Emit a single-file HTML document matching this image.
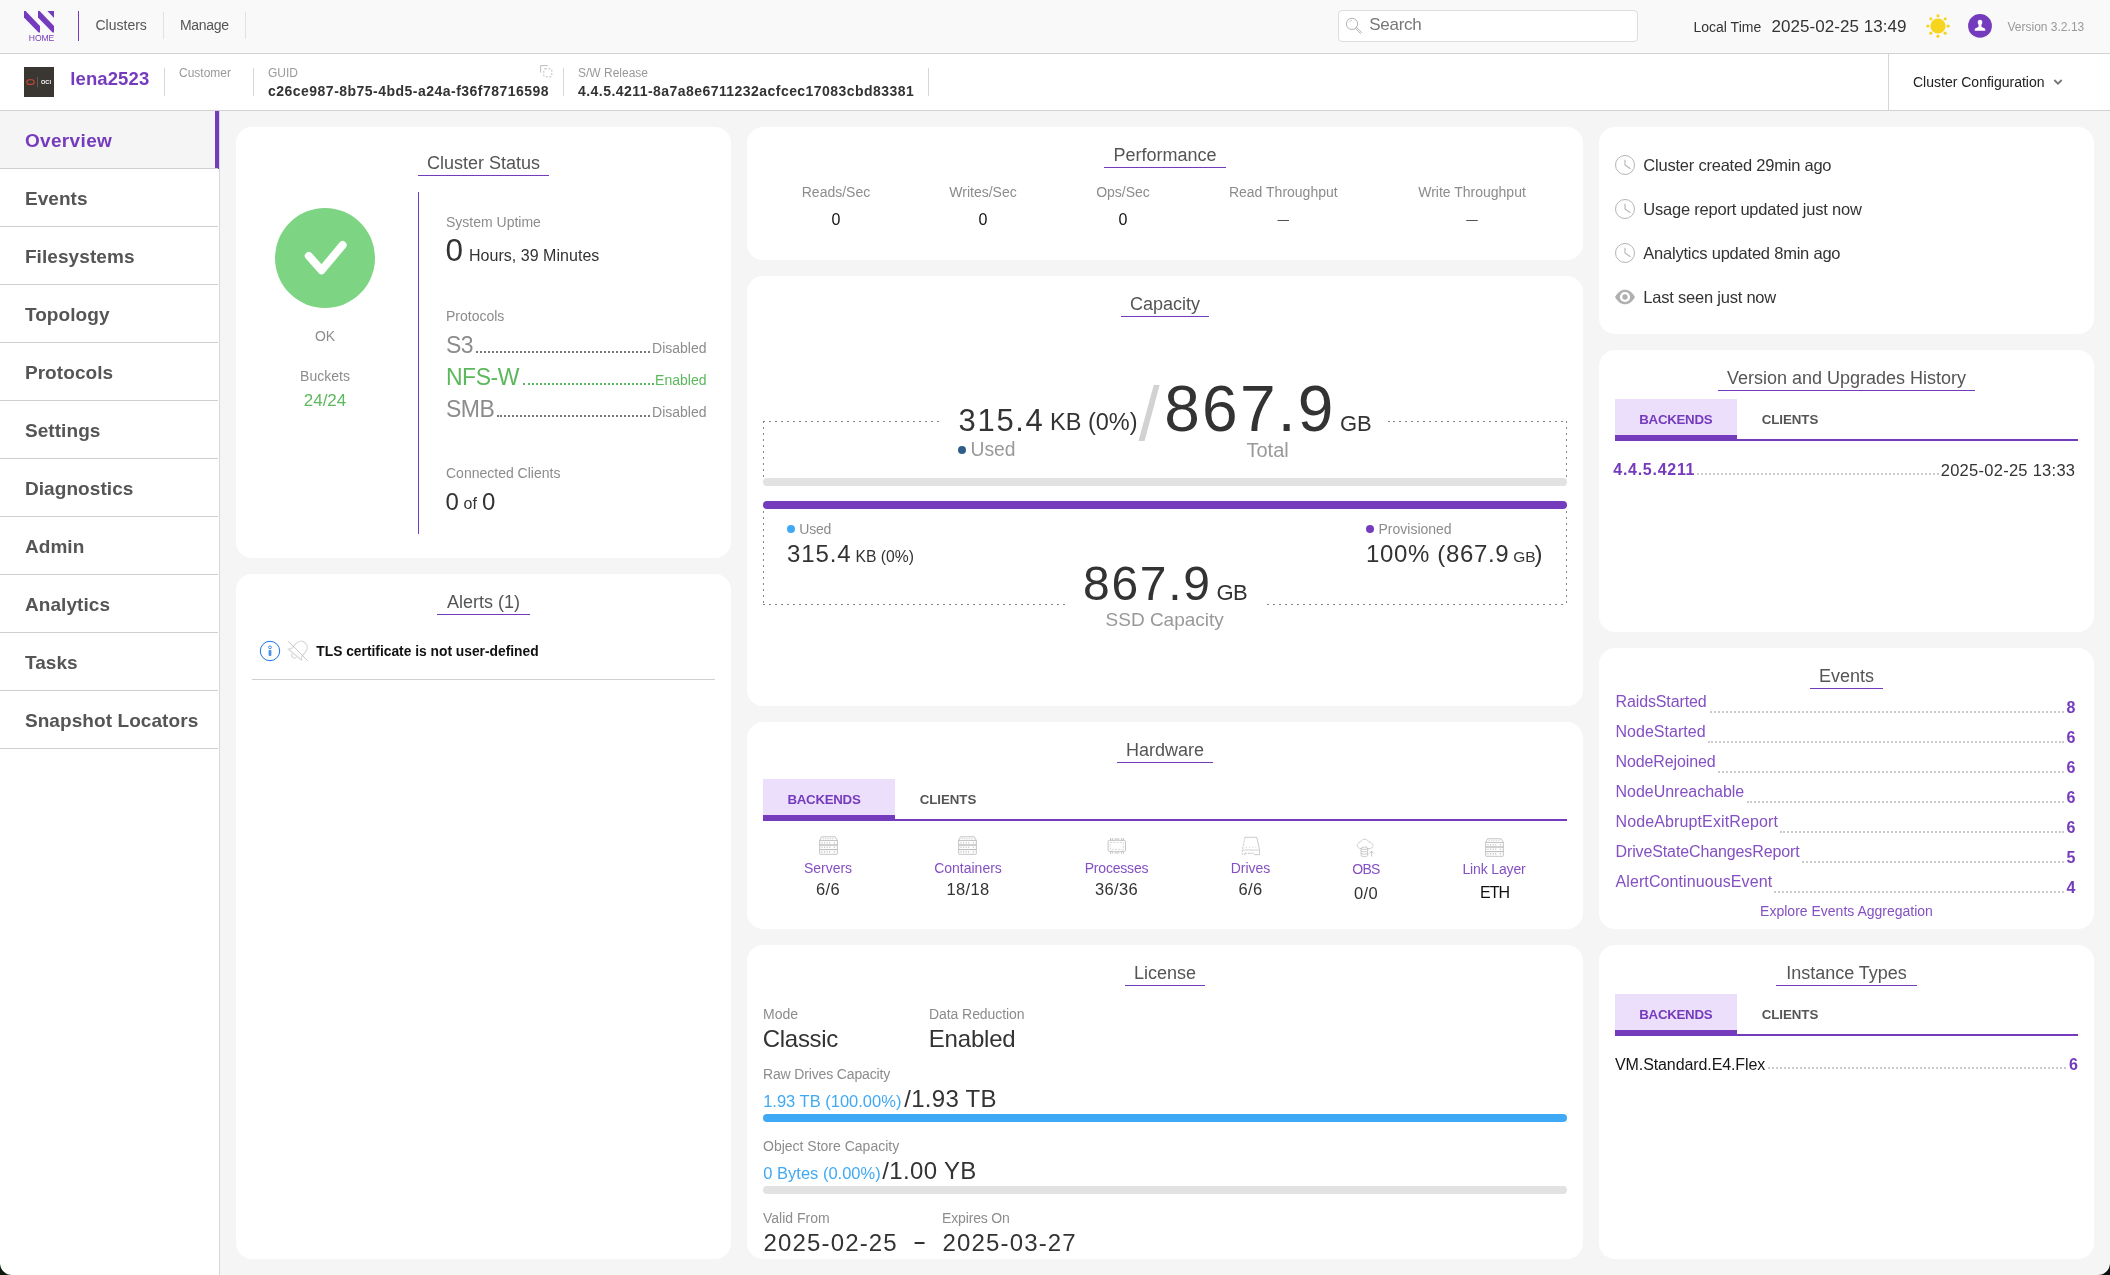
<!DOCTYPE html>
<html lang="en"><head><meta charset="utf-8"><title>lena2523 - Overview</title>
<style>
html,body{margin:0;padding:0}
body{width:2110px;height:1275px;position:relative;overflow:hidden;background:#f5f5f5;font-family:"Liberation Sans",sans-serif;}
#app{position:absolute;left:0;top:0;width:2110px;height:1275px;overflow:hidden;will-change:transform}
.b{position:absolute;display:block}
.t{position:absolute;white-space:nowrap;line-height:1;margin:0;font-weight:400;text-decoration:none;display:block}
.card{background:#fff;border-radius:16px}
h2{font-weight:400}
</style></head>
<body>
<div id="app">
<header>
<div class="b" style="left:0px;top:0px;width:2110px;height:53px;background:#f9f9f9;"></div>
<div class="b" style="left:0px;top:53px;width:2110px;height:1px;background:#d2d2d2;"></div>
<svg class="b" style="left:20px;top:8px" width="40" height="36" viewBox="0 0 40 36"><g fill="#753bbd"><polygon points="4,3 5.6,3 20,18 20,24.6 18.6,24.6 4,9.6"/><polygon points="18,3 19.6,3 34,18 34,24.6 32.6,24.6 18,9.6"/><polygon points="27.4,3 34,3 34,10"/></g></svg>
<span class="t" style="top:33.92px;font-size:8.6px;color:#753bbd;letter-spacing:-0.1px;left:28.8px;">HOME</span>
<div class="b" style="left:78px;top:11px;width:1px;height:30px;background:#753bbd;"></div>
<span class="t" style="top:18.15px;font-size:14px;color:#555;left:95.5px;">Clusters</span>
<div class="b" style="left:163px;top:12px;width:1px;height:27px;background:#e2e2e2;"></div>
<span class="t" style="top:18.15px;font-size:14px;color:#555;letter-spacing:-0.3px;left:180px;">Manage</span>
<div class="b" style="left:245px;top:12px;width:1px;height:27px;background:#e2e2e2;"></div>
<div class="b" style="left:1338px;top:10px;width:300px;height:32px;background:#fff;border:1px solid #ddd;border-radius:4px;box-sizing:border-box;"></div>
<svg class="b" style="left:1344px;top:16px" width="20" height="20" viewBox="0 0 20 20"><g fill="none" stroke="#aaa" stroke-width="0.9"><circle cx="8" cy="7.9" r="5.6"/><path d="M5.2 6.3a3.2 3.2 0 0 1 2.6-1.9" stroke="#ccc"/><path d="M11.6 12.6l1.1-1.1 4.9 4.9-1.1 1.1z"/></g></svg>
<span class="t" style="top:16.41px;font-size:17px;color:#777;letter-spacing:-0.3px;left:1369.3px;">Search</span>
<span class="t" style="top:20.35px;font-size:14px;color:#333;left:1693.5px;">Local Time</span>
<span class="t" style="top:17.81px;font-size:17px;color:#333;letter-spacing:0.05px;left:1771.5px;">2025-02-25 13:49</span>
<svg class="b" style="left:1925px;top:12.9px" width="26" height="26" viewBox="0 0 26 26"><g fill="#f7d51e"><circle cx="13" cy="13" r="7.6"/><circle cx="23.15" cy="13.00" r="1.6"/><circle cx="20.18" cy="20.18" r="1.6"/><circle cx="13.00" cy="23.15" r="1.6"/><circle cx="5.82" cy="20.18" r="1.6"/><circle cx="2.85" cy="13.00" r="1.6"/><circle cx="5.82" cy="5.82" r="1.6"/><circle cx="13.00" cy="2.85" r="1.6"/><circle cx="20.18" cy="5.82" r="1.6"/></g></svg>
<svg class="b" style="left:1968px;top:14px" width="24" height="24" viewBox="0 0 24 24"><circle cx="12" cy="11.9" r="11.9" fill="#753bbd"/><path fill="#fff" d="M12 5.7c1.5 0 2.3 1.1 2.3 2.6 0 1-.4 1.9-.9 2.4v1.6c0 .5.3.8.8 1l2.2.9c.6.3.9.7.9 1.3v1.2H6.700v-1.2c0-.6.3-1 .9-1.300l2.200-.9c.5-.2.800-.5.800-1v-1.600c-.5-.5-.900-1.400-.900-2.400 0-1.500.800-2.600 2.300-2.600z"/></svg>
<span class="t" style="top:21.14px;font-size:12px;color:#999;left:2007.5px;">Version 3.2.13</span>
</header>
<section>
<div class="b" style="left:0px;top:54px;width:2110px;height:56px;background:#fff;"></div>
<div class="b" style="left:0px;top:110px;width:2110px;height:1px;background:#d2d2d2;"></div>
<div class="b" style="left:24px;top:67px;width:30px;height:30px;background:#3a3632;"></div>
<svg class="b" style="left:24px;top:67px" width="30" height="30" viewBox="0 0 30 30"><rect x="2.800" y="12.700" width="7.400" height="4.700" rx="2.350" fill="none" stroke="#c74634" stroke-width="1.100"/><rect x="13.300" y="9.800" width="0.600" height="10.400" fill="#777"/></svg>
<span class="t" style="top:80.26px;font-size:5.6px;color:#fff;font-weight:700;left:41px;">OCI</span>
<span class="t" style="top:70.04px;font-size:18.5px;color:#753bbd;font-weight:700;letter-spacing:0.1px;left:70.3px;">lena2523</span>
<div class="b" style="left:164px;top:68px;width:1px;height:28px;background:#d6d6d6;"></div>
<span class="t" style="top:66.84px;font-size:12px;color:#999;left:179px;">Customer</span>
<div class="b" style="left:252.5px;top:68px;width:1px;height:28px;background:#d6d6d6;"></div>
<span class="t" style="top:66.84px;font-size:12px;color:#999;left:268px;">GUID</span>
<span class="t" style="top:83.75px;font-size:14px;color:#333;font-weight:700;letter-spacing:0.48px;left:268px;">c26ce987-8b75-4bd5-a24a-f36f78716598</span>
<svg class="b" style="left:538px;top:63px" width="16" height="16" viewBox="0 0 16 16"><g fill="none" stroke="#bdbdbd" stroke-width="1"><path d="M2.600 9.500V2.600h7.200"/><rect x="5.800" y="5.800" width="8" height="8" rx="1" stroke-dasharray="2 1.600"/></g></svg>
<div class="b" style="left:563px;top:68px;width:1px;height:28px;background:#d6d6d6;"></div>
<span class="t" style="top:66.84px;font-size:12px;color:#999;left:578px;">S/W Release</span>
<span class="t" style="top:83.75px;font-size:14px;color:#333;font-weight:700;letter-spacing:0.45px;left:578px;">4.4.5.4211-8a7a8e6711232acfcec17083cbd83381</span>
<div class="b" style="left:928px;top:68px;width:1px;height:28px;background:#d6d6d6;"></div>
<div class="b" style="left:1888px;top:54px;width:1px;height:56px;background:#d6d6d6;"></div>
<span class="t" style="top:74.65px;font-size:14px;color:#222;left:1913px;">Cluster Configuration</span>
<svg class="b" style="left:2052px;top:77px" width="12" height="10" viewBox="0 0 12 10"><path d="M2.300 3l3.700 3.700 3.700-3.700" fill="none" stroke="#777" stroke-width="1.800"/></svg>
</section>
<nav>
<div class="b" style="left:0px;top:111px;width:219px;height:1164px;background:#fff;"></div>
<div class="b" style="left:219px;top:111px;width:1px;height:1164px;background:#d8d8d8;"></div>
<div class="b" style="left:0px;top:111px;width:219px;height:57px;background:#f5f5f5;"></div>
<div class="b" style="left:215px;top:111px;width:4px;height:58px;background:#753bbd;"></div>
<div class="b" style="left:0px;top:168px;width:218px;height:1px;background:#cfcfcf;"></div>
<a class="t" style="top:130.72px;font-size:19px;color:#753bbd;font-weight:700;letter-spacing:0.35px;left:24.9px;">Overview</a>
<div class="b" style="left:0px;top:226px;width:218px;height:1px;background:#cfcfcf;"></div>
<a class="t" style="top:188.72px;font-size:19px;color:#555;font-weight:700;letter-spacing:0.08px;left:24.9px;">Events</a>
<div class="b" style="left:0px;top:284px;width:218px;height:1px;background:#cfcfcf;"></div>
<a class="t" style="top:246.72px;font-size:19px;color:#555;font-weight:700;letter-spacing:0.08px;left:24.9px;">Filesystems</a>
<div class="b" style="left:0px;top:342px;width:218px;height:1px;background:#cfcfcf;"></div>
<a class="t" style="top:304.72px;font-size:19px;color:#555;font-weight:700;letter-spacing:0.08px;left:24.9px;">Topology</a>
<div class="b" style="left:0px;top:400px;width:218px;height:1px;background:#cfcfcf;"></div>
<a class="t" style="top:362.72px;font-size:19px;color:#555;font-weight:700;letter-spacing:0.08px;left:24.9px;">Protocols</a>
<div class="b" style="left:0px;top:458px;width:218px;height:1px;background:#cfcfcf;"></div>
<a class="t" style="top:420.72px;font-size:19px;color:#555;font-weight:700;letter-spacing:0.08px;left:24.9px;">Settings</a>
<div class="b" style="left:0px;top:516px;width:218px;height:1px;background:#cfcfcf;"></div>
<a class="t" style="top:478.72px;font-size:19px;color:#555;font-weight:700;letter-spacing:0.08px;left:24.9px;">Diagnostics</a>
<div class="b" style="left:0px;top:574px;width:218px;height:1px;background:#cfcfcf;"></div>
<a class="t" style="top:536.72px;font-size:19px;color:#555;font-weight:700;letter-spacing:0.08px;left:24.9px;">Admin</a>
<div class="b" style="left:0px;top:632px;width:218px;height:1px;background:#cfcfcf;"></div>
<a class="t" style="top:594.72px;font-size:19px;color:#555;font-weight:700;letter-spacing:0.08px;left:24.9px;">Analytics</a>
<div class="b" style="left:0px;top:690px;width:218px;height:1px;background:#cfcfcf;"></div>
<a class="t" style="top:652.72px;font-size:19px;color:#555;font-weight:700;letter-spacing:0.08px;left:24.9px;">Tasks</a>
<div class="b" style="left:0px;top:748px;width:218px;height:1px;background:#cfcfcf;"></div>
<a class="t" style="top:710.72px;font-size:19px;color:#555;font-weight:700;letter-spacing:0.08px;left:24.9px;">Snapshot Locators</a>
</nav>
<main>
<div class="b card" style="left:236px;top:127px;width:495px;height:431px;"></div>
<h2 class="t" style="top:153.76px;font-size:18px;color:#555;left:483.5px;transform:translateX(-50%);">Cluster Status</h2>
<div class="b" style="left:418px;top:175px;width:131px;height:1px;background:#753bbd;"></div>
<div class="b" style="left:275px;top:208px;width:100px;height:100px;background:#7dd482;border-radius:50%;"></div>
<svg class="b" style="left:275px;top:208px" width="100" height="100" viewBox="0 0 100 100"><path d="M33.800 47.900L46.600 62.300 67.600 37.100" fill="none" stroke="#fff" stroke-width="8" stroke-linecap="round" stroke-linejoin="round"/></svg>
<span class="t" style="top:329.15px;font-size:14px;color:#8c8c8c;left:325px;transform:translateX(-50%);">OK</span>
<span class="t" style="top:369.35px;font-size:14px;color:#8c8c8c;left:325px;transform:translateX(-50%);">Buckets</span>
<span class="t" style="top:391.61px;font-size:17px;color:#5cb85c;left:325px;transform:translateX(-50%);">24/24</span>
<div class="b" style="left:418px;top:192px;width:1px;height:342px;background:#753bbd;"></div>
<span class="t" style="top:215.15px;font-size:14px;color:#8c8c8c;left:446px;">System Uptime</span>
<span class="t" style="top:235.24px;font-size:31.5px;color:#333;left:445.6px;">0</span>
<span class="t" style="top:248.26px;font-size:16px;color:#333;letter-spacing:0.03px;left:469px;">Hours, 39 Minutes</span>
<span class="t" style="top:308.75px;font-size:14px;color:#8c8c8c;left:446px;">Protocols</span>
<span class="t" style="top:333.53px;font-size:23px;color:#8c8c8c;letter-spacing:-0.5px;left:446px;">S3</span>
<span class="t" style="top:341.15px;font-size:14px;color:#8c8c8c;right:1403.50px;">Disabled</span>
<div class="b" style="left:476px;top:351px;width:174px;height:0px;border-top:2px dotted #777;"></div>
<span class="t" style="top:365.53px;font-size:23px;color:#5cb85c;letter-spacing:-0.5px;left:446px;">NFS-W</span>
<span class="t" style="top:373.15px;font-size:14px;color:#5cb85c;right:1403.50px;">Enabled</span>
<div class="b" style="left:523px;top:383px;width:131px;height:0px;border-top:2px dotted #5cb85c;"></div>
<span class="t" style="top:397.53px;font-size:23px;color:#8c8c8c;letter-spacing:-0.5px;left:446px;">SMB</span>
<span class="t" style="top:405.15px;font-size:14px;color:#8c8c8c;right:1403.50px;">Disabled</span>
<div class="b" style="left:497px;top:415px;width:153px;height:0px;border-top:2px dotted #777;"></div>
<span class="t" style="top:466.45px;font-size:14px;color:#8c8c8c;left:446px;">Connected Clients</span>
<span class="t" style="top:489.68px;font-size:24px;color:#333;left:445.5px;">0</span>
<span class="t" style="top:496.46px;font-size:16px;color:#333;left:463.5px;">of</span>
<span class="t" style="top:489.68px;font-size:24px;color:#333;left:482px;">0</span>
<div class="b card" style="left:236px;top:574px;width:495px;height:685px;"></div>
<h2 class="t" style="top:593.26px;font-size:18px;color:#555;left:483.5px;transform:translateX(-50%);">Alerts (1)</h2>
<div class="b" style="left:437px;top:614px;width:93px;height:1px;background:#753bbd;"></div>
<svg class="b" style="left:259px;top:640px" width="22" height="22" viewBox="0 0 22 22"><circle cx="11" cy="11" r="9.700" fill="none" stroke="#1a73e8" stroke-width="1"/><circle cx="11" cy="7.300" r="1.400" fill="none" stroke="#1a73e8" stroke-width="0.800"/><rect x="9.600" y="10" width="2.800" height="5.900" rx="0.800" fill="#4a90ee"/></svg>
<svg class="b" style="left:286px;top:639px" width="24" height="24" viewBox="0 0 24 24"><g fill="none" stroke="#d9d9d9" stroke-width="1"><g transform="rotate(40 12 12) translate(12 12) scale(1.18) translate(-12 -12.600)"><path d="M12 3.500c3.400 0 5.400 2.500 5.400 5.800v4.700l1.800 2.600H4.800l1.800-2.600V9.300c0-3.300 2-5.800 5.400-5.800z"/><path d="M9.800 17.400a2.200 2.200 0 0 0 4.400 0"/></g><path d="M2.200 2.100l19.600 19.700" stroke="#c8c8c8"/></g></svg>
<span class="t" style="top:644.52px;font-size:13.8px;color:#111;font-weight:700;left:316.3px;">TLS certificate is not user-defined</span>
<div class="b" style="left:252px;top:679px;width:463px;height:1px;background:#d0d0d0;"></div>
<div class="b card" style="left:747px;top:127px;width:836px;height:133px;"></div>
<h2 class="t" style="top:145.76px;font-size:18px;color:#555;left:1165px;transform:translateX(-50%);">Performance</h2>
<div class="b" style="left:1104px;top:167px;width:122px;height:1px;background:#753bbd;"></div>
<span class="t" style="top:185.45px;font-size:14px;color:#8c8c8c;left:836px;transform:translateX(-50%);">Reads/Sec</span>
<span class="t" style="top:212.46px;font-size:16px;color:#111;left:836px;transform:translateX(-50%);">0</span>
<span class="t" style="top:185.45px;font-size:14px;color:#8c8c8c;left:983px;transform:translateX(-50%);">Writes/Sec</span>
<span class="t" style="top:212.46px;font-size:16px;color:#111;left:983px;transform:translateX(-50%);">0</span>
<span class="t" style="top:185.45px;font-size:14px;color:#8c8c8c;left:1123px;transform:translateX(-50%);">Ops/Sec</span>
<span class="t" style="top:212.46px;font-size:16px;color:#111;left:1123px;transform:translateX(-50%);">0</span>
<span class="t" style="top:185.45px;font-size:14px;color:#8c8c8c;left:1283.3px;transform:translateX(-50%);">Read Throughput</span>
<span class="t" style="top:213.87px;font-size:11.5px;color:#111;left:1283.3px;transform:translateX(-50%);">—</span>
<span class="t" style="top:185.45px;font-size:14px;color:#8c8c8c;left:1472px;transform:translateX(-50%);">Write Throughput</span>
<span class="t" style="top:213.87px;font-size:11.5px;color:#111;left:1472px;transform:translateX(-50%);">—</span>
<div class="b card" style="left:747px;top:276px;width:836px;height:430px;"></div>
<h2 class="t" style="top:295.06px;font-size:18px;color:#555;left:1165px;transform:translateX(-50%);">Capacity</h2>
<div class="b" style="left:1121px;top:316px;width:88px;height:1px;background:#753bbd;"></div>
<div class="b" style="left:763px;top:421px;width:177px;height:1px;background:repeating-linear-gradient(to right,#858585 0 2px,transparent 2px 6px);background-position:0px 0;"></div>
<div class="b" style="left:1388px;top:421px;width:179px;height:1px;background:repeating-linear-gradient(to right,#858585 0 2px,transparent 2px 6px);background-position:5px 0;"></div>
<div class="b" style="left:763px;top:421px;width:1px;height:57px;background:repeating-linear-gradient(to bottom,#858585 0 2px,transparent 2px 6px);background-position:0 0px;"></div>
<div class="b" style="left:1566px;top:421px;width:1px;height:57px;background:repeating-linear-gradient(to bottom,#858585 0 2px,transparent 2px 6px);background-position:0 0px;"></div>
<span class="t" style="top:404.96px;font-size:31px;color:#333;letter-spacing:1.65px;left:958.6px;">315.4</span>
<span class="t" style="top:411.31px;font-size:23.5px;color:#333;left:1050px;">KB (0%)</span>
<span class="t" style="top:375.67px;font-size:76px;color:#d2d2d2;left:1138.6px;">/</span>
<span class="t" style="top:377.02px;font-size:64px;color:#333;letter-spacing:2.2px;left:1164.3px;">867.9</span>
<span class="t" style="top:412.58px;font-size:22px;color:#333;left:1340px;">GB</span>
<div class="b" style="left:957.6px;top:445.7px;width:8px;height:8px;background:#2f5d8a;border-radius:50%;"></div>
<span class="t" style="top:440.26px;font-size:19.3px;color:#999;left:970.5px;">Used</span>
<span class="t" style="top:439.67px;font-size:20px;color:#999;left:1267.6px;transform:translateX(-50%);">Total</span>
<div class="b" style="left:763px;top:478px;width:804px;height:8px;background:#e2e2e2;border-radius:4px;"></div>
<div class="b" style="left:763px;top:501px;width:804px;height:8px;background:#753bbd;border-radius:4px;"></div>
<div class="b" style="left:763px;top:509px;width:1px;height:95px;background:repeating-linear-gradient(to bottom,#858585 0 2px,transparent 2px 6px);background-position:0 2px;"></div>
<div class="b" style="left:1566px;top:509px;width:1px;height:95px;background:repeating-linear-gradient(to bottom,#858585 0 2px,transparent 2px 6px);background-position:0 2px;"></div>
<div class="b" style="left:763px;top:604px;width:303px;height:1px;background:repeating-linear-gradient(to right,#858585 0 2px,transparent 2px 6px);background-position:0px 0;"></div>
<div class="b" style="left:1267px;top:604px;width:300px;height:1px;background:repeating-linear-gradient(to right,#858585 0 2px,transparent 2px 6px);background-position:0px 0;"></div>
<div class="b" style="left:787px;top:525px;width:8px;height:8px;background:#3fa9f5;border-radius:50%;"></div>
<span class="t" style="top:521.75px;font-size:14px;color:#8c8c8c;letter-spacing:-0.2px;left:799.3px;">Used</span>
<span class="t" style="top:542.08px;font-size:24px;color:#333;letter-spacing:0.9px;left:787px;">315.4</span>
<span class="t" style="top:549.11px;font-size:15.7px;color:#333;left:855.5px;">KB (0%)</span>
<div class="b" style="left:1366px;top:525px;width:8px;height:8px;background:#753bbd;border-radius:50%;"></div>
<span class="t" style="top:521.75px;font-size:14px;color:#8c8c8c;left:1378.5px;">Provisioned</span>
<span class="t" style="top:541.88px;font-size:24px;color:#333;letter-spacing:0.65px;left:1366px;">100% (867.9</span>
<span class="t" style="top:549.08px;font-size:15.5px;color:#333;left:1513.3px;">GB</span>
<span class="t" style="top:541.88px;font-size:24px;color:#333;left:1534.6px;">)</span>
<span class="t" style="top:559.77px;font-size:48px;color:#333;letter-spacing:1.7px;left:1083px;">867.9</span>
<span class="t" style="top:581.78px;font-size:22px;color:#333;letter-spacing:-0.5px;left:1216.5px;">GB</span>
<span class="t" style="top:609.92px;font-size:19px;color:#999;left:1164.7px;transform:translateX(-50%);">SSD Capacity</span>
<div class="b card" style="left:747px;top:722px;width:836px;height:207px;"></div>
<h2 class="t" style="top:741.16px;font-size:18px;color:#555;left:1165px;transform:translateX(-50%);">Hardware</h2>
<div class="b" style="left:1117px;top:762px;width:96px;height:1px;background:#753bbd;"></div>
<div class="b" style="left:763px;top:779px;width:132px;height:36px;background:#ecdffb;"></div>
<div class="b" style="left:763px;top:815px;width:132px;height:6px;background:#753bbd;"></div>
<div class="b" style="left:763px;top:819px;width:804px;height:2px;background:#753bbd;"></div>
<span class="t" style="top:792.74px;font-size:13.3px;color:#753bbd;font-weight:700;letter-spacing:-0.3px;left:787.5px;">BACKENDS</span>
<span class="t" style="top:792.74px;font-size:13.3px;color:#555;font-weight:700;letter-spacing:-0.05px;left:919.7px;">CLIENTS</span>
<svg class="b" style="left:818.5px;top:836.4px" width="20" height="20" viewBox="0 0 20 20"><g fill="none" stroke="#bdbdbd" stroke-width="0.900"><path d="M0.700 4.400L2.500 0.800h13.700l2.100 3.600"/><rect x="0.700" y="4.400" width="17.600" height="4.600"/><rect x="0.700" y="9" width="17.600" height="4.600"/><rect x="0.700" y="13.600" width="17.600" height="4.700" rx="0.500"/><path d="M3 5.900v1.600M5.600 5.900v1.600M8.200 5.900v1.600M10.700 5.900v1.600M15.300 5.900v1.600M3 10.500v1.600M5.600 10.500v1.600M8.200 10.500v1.600M10.700 10.500v1.600M15.300 10.500v1.600M3 15.100v1.600M5.600 15.100v1.600M8.200 15.100v1.600M10.700 15.100v1.600M15.300 15.100v1.600" stroke-width="1.100" stroke="#c9c9c9"/><path d="M3.500 2.700h11.400" stroke-dasharray="1.400 1" stroke="#d0d0d0"/></g></svg>
<a class="t" style="top:861.45px;font-size:14px;color:#8450c4;left:828px;transform:translateX(-50%);">Servers</a>
<span class="t" style="top:880.73px;font-size:16.5px;color:#333;letter-spacing:0.3px;left:828px;transform:translateX(-50%);">6/6</span>
<svg class="b" style="left:958.4px;top:836.4px" width="20" height="20" viewBox="0 0 20 20"><g fill="none" stroke="#bdbdbd" stroke-width="0.900"><path d="M0.700 4.400L2.500 0.800h13.700l2.100 3.600"/><rect x="0.700" y="4.400" width="17.600" height="4.600"/><rect x="0.700" y="9" width="17.600" height="4.600"/><rect x="0.700" y="13.600" width="17.600" height="4.700" rx="0.500"/><path d="M3 5.900v1.600M5.600 5.900v1.600M8.200 5.900v1.600M10.700 5.900v1.600M15.300 5.900v1.600M3 10.500v1.600M5.600 10.500v1.600M8.200 10.500v1.600M10.700 10.500v1.600M15.300 10.500v1.600M3 15.100v1.600M5.600 15.100v1.600M8.200 15.100v1.600M10.700 15.100v1.600M15.300 15.100v1.600" stroke-width="1.100" stroke="#c9c9c9"/><path d="M3.500 2.700h11.400" stroke-dasharray="1.400 1" stroke="#d0d0d0"/></g></svg>
<a class="t" style="top:861.45px;font-size:14px;color:#8450c4;left:968px;transform:translateX(-50%);">Containers</a>
<span class="t" style="top:880.73px;font-size:16.5px;color:#333;letter-spacing:0.3px;left:968px;transform:translateX(-50%);">18/18</span>
<svg class="b" style="left:1107px;top:837px" width="20" height="20" viewBox="0 0 20 20"><g fill="none" stroke="#bdbdbd" stroke-width="0.900"><rect x="1.100" y="3.400" width="17.400" height="11" rx="1.200"/><rect x="3.200" y="5.500" width="13.200" height="6.800" stroke-dasharray="2 1.300" stroke-width="0.600"/><path d="M3.500 1v2.400M5.300 1v2.400M14.600 1v2.400M16.400 1v2.400M3.500 14.400v2.400M5.300 14.400v2.400M14.600 14.400v2.400M16.400 14.400v2.400"/><rect x="7.400" y="1.200" width="5" height="2.200" fill="#d8d8d8" stroke="none"/><rect x="7.400" y="14.400" width="5" height="2.200" fill="#d8d8d8" stroke="none"/></g></svg>
<a class="t" style="top:861.45px;font-size:14px;color:#8450c4;letter-spacing:-0.2px;left:1116.5px;transform:translateX(-50%);">Processes</a>
<span class="t" style="top:880.73px;font-size:16.5px;color:#333;letter-spacing:0.3px;left:1116.5px;transform:translateX(-50%);">36/36</span>
<svg class="b" style="left:1241px;top:836px" width="20" height="20" viewBox="0 0 20 20"><g fill="none" stroke="#bdbdbd" stroke-width="0.800"><path d="M4 1.300h11.800"/><path d="M4 1.300L1.300 14v4.600h3" stroke-dasharray="2.200 1"/><path d="M15.800 1.300L18.600 14v4.600h-5.500"/><path d="M1.300 14h17.300" stroke="#d8d8d8" stroke-width="1.200"/><path d="M3.200 17.300h9.600" stroke-dasharray="3 0.800"/><path d="M4.500 11.200h11" stroke-dasharray="1.500 1.800" stroke="#d4d4d4"/></g></svg>
<a class="t" style="top:861.45px;font-size:14px;color:#8450c4;left:1250.5px;transform:translateX(-50%);">Drives</a>
<span class="t" style="top:880.73px;font-size:16.5px;color:#333;letter-spacing:0.3px;left:1250.5px;transform:translateX(-50%);">6/6</span>
<svg class="b" style="left:1356px;top:838px" width="20" height="20" viewBox="0 0 20 20"><g fill="none" stroke="#bdbdbd" stroke-width="0.800"><path d="M5 10.600c-2.400-.2-3.800-1.600-3.800-3.300 0-1.700 1.300-3 3.300-3.200C5 2.300 6.500 1.200 8.500 1.200c2.200 0 3.600 1.200 4.100 2.800 2.400.1 4.300 1.600 4.300 3.700 0 1.700-1.200 2.800-3.100 2.900h-2.400" stroke-dasharray="3 0.500"/><ellipse cx="8.400" cy="10.200" rx="3.300" ry="1.200"/><path d="M5.100 10.200v7.200c0 .7 1.500 1.200 3.300 1.200s3.300-.5 3.300-1.200v-7.200M5.100 12.600c0 .7 1.500 1.200 3.300 1.200s3.300-.5 3.300-1.200M5.100 15c0 .7 1.500 1.200 3.300 1.200s3.300-.5 3.300-1.200"/><path d="M15.600 18.600v-5.300M13.400 15.500l2.200-2.200 2.200 2.200" stroke="#b8b8b8"/></g></svg>
<a class="t" style="top:862.35px;font-size:14px;color:#8450c4;letter-spacing:-0.7px;left:1366px;transform:translateX(-50%);">OBS</a>
<span class="t" style="top:884.93px;font-size:16.5px;color:#333;letter-spacing:0.3px;left:1366px;transform:translateX(-50%);">0/0</span>
<svg class="b" style="left:1484.5px;top:838.4px" width="20" height="20" viewBox="0 0 20 20"><g fill="none" stroke="#bdbdbd" stroke-width="0.900"><path d="M0.700 4.400L2.500 0.800h13.700l2.100 3.600"/><rect x="0.700" y="4.400" width="17.600" height="4.600"/><rect x="0.700" y="9" width="17.600" height="4.600"/><rect x="0.700" y="13.600" width="17.600" height="4.700" rx="0.500"/><path d="M3 5.900v1.600M5.600 5.900v1.600M8.200 5.900v1.600M10.700 5.900v1.600M15.300 5.900v1.600M3 10.500v1.600M5.600 10.500v1.600M8.200 10.500v1.600M10.700 10.500v1.600M15.300 10.500v1.600M3 15.100v1.600M5.600 15.100v1.600M8.200 15.100v1.600M10.700 15.100v1.600M15.300 15.100v1.600" stroke-width="1.100" stroke="#c9c9c9"/><path d="M3.500 2.700h11.400" stroke-dasharray="1.400 1" stroke="#d0d0d0"/></g></svg>
<a class="t" style="top:862.35px;font-size:14px;color:#8450c4;letter-spacing:-0.15px;left:1494px;transform:translateX(-50%);">Link Layer</a>
<span class="t" style="top:885.36px;font-size:16px;color:#111;letter-spacing:-1.05px;left:1494.5px;transform:translateX(-50%);">ETH</span>
<div class="b card" style="left:747px;top:945px;width:836px;height:314px;"></div>
<h2 class="t" style="top:963.76px;font-size:18px;color:#555;left:1165px;transform:translateX(-50%);">License</h2>
<div class="b" style="left:1125px;top:985px;width:80px;height:1px;background:#753bbd;"></div>
<span class="t" style="top:1007.05px;font-size:14px;color:#8c8c8c;left:763px;">Mode</span>
<span class="t" style="top:1027.38px;font-size:24px;color:#333;letter-spacing:-0.3px;left:762.8px;">Classic</span>
<span class="t" style="top:1007.05px;font-size:14px;color:#8c8c8c;letter-spacing:-0.07px;left:929px;">Data Reduction</span>
<span class="t" style="top:1027.38px;font-size:24px;color:#333;letter-spacing:-0.2px;left:928.8px;">Enabled</span>
<span class="t" style="top:1067.15px;font-size:14px;color:#8c8c8c;letter-spacing:-0.15px;left:763px;">Raw Drives Capacity</span>
<span class="t" style="top:1093.23px;font-size:16.5px;color:#3fa9f5;left:763.2px;">1.93 TB (100.00%)</span>
<span class="t" style="top:1086.88px;font-size:24px;color:#333;letter-spacing:0.3px;left:904.2px;">/1.93 TB</span>
<div class="b" style="left:763px;top:1114px;width:804px;height:8px;background:#3fa9f5;border-radius:4px;"></div>
<span class="t" style="top:1139.45px;font-size:14px;color:#8c8c8c;left:763px;">Object Store Capacity</span>
<span class="t" style="top:1165.23px;font-size:16.5px;color:#3fa9f5;left:763.3px;">0 Bytes (0.00%)</span>
<span class="t" style="top:1158.88px;font-size:24px;color:#333;letter-spacing:0.35px;left:882.3px;">/1.00 YB</span>
<div class="b" style="left:763px;top:1186px;width:804px;height:8px;background:#e2e2e2;border-radius:4px;"></div>
<span class="t" style="top:1211.35px;font-size:14px;color:#8c8c8c;left:763px;">Valid From</span>
<span class="t" style="top:1230.88px;font-size:24px;color:#333;letter-spacing:1.15px;left:763.5px;">2025-02-25</span>
<span class="t" style="top:1231.37px;font-size:20px;color:#333;font-weight:700;left:914px;">–</span>
<span class="t" style="top:1211.35px;font-size:14px;color:#8c8c8c;letter-spacing:-0.15px;left:942px;">Expires On</span>
<span class="t" style="top:1230.88px;font-size:24px;color:#333;letter-spacing:1.15px;left:942.5px;">2025-03-27</span>
<div class="b card" style="left:1599px;top:127px;width:495px;height:207px;"></div>
<svg class="b" style="left:1614px;top:154px" width="22" height="22" viewBox="0 0 22 22"><circle cx="11" cy="11" r="9.500" fill="none" stroke="#b4b4b4" stroke-width="1"/><path d="M11 5.700v5.300l5.300 3.800" fill="none" stroke="#b4b4b4" stroke-width="1.100"/></svg>
<span class="t" style="top:157.03px;font-size:16.5px;color:#333;letter-spacing:-0.22px;left:1643.3px;">Cluster created 29min ago</span>
<svg class="b" style="left:1614px;top:198px" width="22" height="22" viewBox="0 0 22 22"><circle cx="11" cy="11" r="9.500" fill="none" stroke="#b4b4b4" stroke-width="1"/><path d="M11 5.700v5.300l5.300 3.800" fill="none" stroke="#b4b4b4" stroke-width="1.100"/></svg>
<span class="t" style="top:201.03px;font-size:16.5px;color:#333;letter-spacing:-0.22px;left:1643.3px;">Usage report updated just now</span>
<svg class="b" style="left:1614px;top:242px" width="22" height="22" viewBox="0 0 22 22"><circle cx="11" cy="11" r="9.500" fill="none" stroke="#b4b4b4" stroke-width="1"/><path d="M11 5.700v5.300l5.300 3.800" fill="none" stroke="#b4b4b4" stroke-width="1.100"/></svg>
<span class="t" style="top:245.03px;font-size:16.5px;color:#333;letter-spacing:-0.22px;left:1643.3px;">Analytics updated 8min ago</span>
<svg class="b" style="left:1614px;top:286px" width="22" height="22" viewBox="0 0 22 22"><path d="M1 11c2.500-4.700 6-7.300 10-7.300s7.500 2.600 10 7.300c-2.500 4.700-6 7.300-10 7.300S3.500 15.700 1 11z" fill="#b0b0b0"/><circle cx="11" cy="11" r="5.100" fill="#fff"/><circle cx="11" cy="11" r="2.700" fill="#b0b0b0"/></svg>
<span class="t" style="top:289.03px;font-size:16.5px;color:#333;letter-spacing:-0.22px;left:1643.3px;">Last seen just now</span>
<div class="b card" style="left:1599px;top:350px;width:495px;height:282px;"></div>
<h2 class="t" style="top:368.76px;font-size:18px;color:#555;left:1846.5px;transform:translateX(-50%);">Version and Upgrades History</h2>
<div class="b" style="left:1718px;top:390px;width:257px;height:1px;background:#753bbd;"></div>
<div class="b" style="left:1615px;top:399px;width:122px;height:36px;background:#ecdffb;"></div>
<div class="b" style="left:1615px;top:435px;width:122px;height:6px;background:#753bbd;"></div>
<div class="b" style="left:1615px;top:439px;width:463px;height:2px;background:#753bbd;"></div>
<span class="t" style="top:412.74px;font-size:13.3px;color:#753bbd;font-weight:700;letter-spacing:-0.3px;left:1639.3px;">BACKENDS</span>
<span class="t" style="top:412.74px;font-size:13.3px;color:#555;font-weight:700;letter-spacing:-0.05px;left:1761.7px;">CLIENTS</span>
<span class="t" style="top:462.16px;font-size:16px;color:#753bbd;font-weight:700;letter-spacing:0.72px;left:1613.3px;">4.4.5.4211</span>
<div class="b" style="left:1697px;top:473px;width:242px;height:0px;border-top:2px dotted #cbcbcb;"></div>
<span class="t" style="top:461.73px;font-size:16.5px;color:#333;letter-spacing:0.27px;right:34.70px;">2025-02-25 13:33</span>
<div class="b card" style="left:1599px;top:648px;width:495px;height:281px;"></div>
<h2 class="t" style="top:667.06px;font-size:18px;color:#555;left:1846.5px;transform:translateX(-50%);">Events</h2>
<div class="b" style="left:1810px;top:688px;width:73px;height:1px;background:#753bbd;"></div>
<a class="t" style="top:693.56px;font-size:16px;color:#8450c4;letter-spacing:-0.12px;left:1615.5px;">RaidsStarted</a>
<div class="b" style="left:1709.5px;top:711px;width:354.5px;height:0px;border-top:2px dotted #cbcbcb;"></div>
<span class="t" style="top:699.96px;font-size:16px;color:#753bbd;font-weight:700;right:34.50px;">8</span>
<a class="t" style="top:723.56px;font-size:16px;color:#8450c4;letter-spacing:0.02px;left:1615.5px;">NodeStarted</a>
<div class="b" style="left:1707.5px;top:741px;width:356.5px;height:0px;border-top:2px dotted #cbcbcb;"></div>
<span class="t" style="top:729.96px;font-size:16px;color:#753bbd;font-weight:700;right:34.50px;">6</span>
<a class="t" style="top:753.56px;font-size:16px;color:#8450c4;letter-spacing:-0.12px;left:1615.5px;">NodeRejoined</a>
<div class="b" style="left:1718px;top:771px;width:346px;height:0px;border-top:2px dotted #cbcbcb;"></div>
<span class="t" style="top:759.96px;font-size:16px;color:#753bbd;font-weight:700;right:34.50px;">6</span>
<a class="t" style="top:783.56px;font-size:16px;color:#8450c4;letter-spacing:-0.02px;left:1615.5px;">NodeUnreachable</a>
<div class="b" style="left:1746.5px;top:801px;width:317.5px;height:0px;border-top:2px dotted #cbcbcb;"></div>
<span class="t" style="top:789.96px;font-size:16px;color:#753bbd;font-weight:700;right:34.50px;">6</span>
<a class="t" style="top:813.56px;font-size:16px;color:#8450c4;letter-spacing:0.12px;left:1615.5px;">NodeAbruptExitReport</a>
<div class="b" style="left:1780px;top:831px;width:284px;height:0px;border-top:2px dotted #cbcbcb;"></div>
<span class="t" style="top:819.96px;font-size:16px;color:#753bbd;font-weight:700;right:34.50px;">6</span>
<a class="t" style="top:843.56px;font-size:16px;color:#8450c4;letter-spacing:-0.12px;left:1615.5px;">DriveStateChangesReport</a>
<div class="b" style="left:1802px;top:861px;width:262px;height:0px;border-top:2px dotted #cbcbcb;"></div>
<span class="t" style="top:849.96px;font-size:16px;color:#753bbd;font-weight:700;right:34.50px;">5</span>
<a class="t" style="top:873.56px;font-size:16px;color:#8450c4;letter-spacing:0.1px;left:1615.5px;">AlertContinuousEvent</a>
<div class="b" style="left:1774px;top:891px;width:290px;height:0px;border-top:2px dotted #cbcbcb;"></div>
<span class="t" style="top:879.96px;font-size:16px;color:#753bbd;font-weight:700;right:34.50px;">4</span>
<a class="t" style="top:903.95px;font-size:14px;color:#8450c4;left:1846.5px;transform:translateX(-50%);">Explore Events Aggregation</a>
<div class="b card" style="left:1599px;top:945px;width:495px;height:314px;"></div>
<h2 class="t" style="top:963.76px;font-size:18px;color:#555;left:1846.5px;transform:translateX(-50%);">Instance Types</h2>
<div class="b" style="left:1776px;top:985px;width:141px;height:1px;background:#753bbd;"></div>
<div class="b" style="left:1615px;top:994px;width:122px;height:36px;background:#ecdffb;"></div>
<div class="b" style="left:1615px;top:1030px;width:122px;height:6px;background:#753bbd;"></div>
<div class="b" style="left:1615px;top:1034px;width:463px;height:2px;background:#753bbd;"></div>
<span class="t" style="top:1007.74px;font-size:13.3px;color:#753bbd;font-weight:700;letter-spacing:-0.3px;left:1639.3px;">BACKENDS</span>
<span class="t" style="top:1007.74px;font-size:13.3px;color:#555;font-weight:700;letter-spacing:-0.05px;left:1761.7px;">CLIENTS</span>
<span class="t" style="top:1056.96px;font-size:16px;color:#161616;letter-spacing:-0.1px;left:1615px;">VM.Standard.E4.Flex</span>
<div class="b" style="left:1767.5px;top:1067px;width:298.5px;height:0px;border-top:2px dotted #cbcbcb;"></div>
<span class="t" style="top:1056.96px;font-size:16px;color:#753bbd;font-weight:700;right:32.00px;">6</span>
</main>
<svg class="b" style="left:0px;top:1263px" width="12" height="12" viewBox="0 0 12 12"><path d="M0 0v12h12A12 12 0 0 1 0 0z" fill="#0c1a0c"/></svg>
<svg class="b" style="left:2098px;top:1263px" width="12" height="12" viewBox="0 0 12 12"><path d="M12 0v12H0A12 12 0 0 0 12 0z" fill="#111"/></svg>
</div>
</body></html>
